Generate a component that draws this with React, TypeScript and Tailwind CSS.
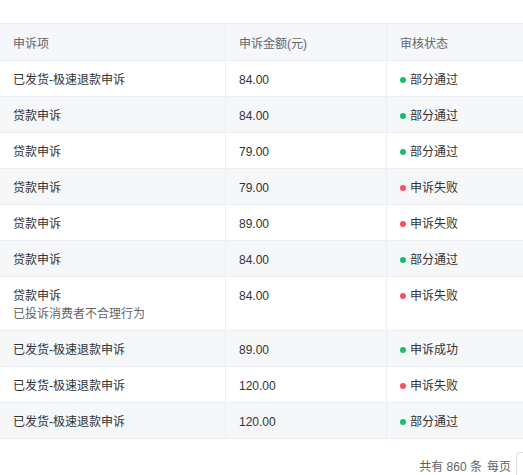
import React from "react";

type Row = { item: string; sub?: string; amount: string; status: string; ok: boolean };

const rows: Row[] = [
  { item: "已发货-极速退款申诉", amount: "84.00", status: "部分通过", ok: true },
  { item: "贷款申诉", amount: "84.00", status: "部分通过", ok: true },
  { item: "贷款申诉", amount: "79.00", status: "部分通过", ok: true },
  { item: "贷款申诉", amount: "79.00", status: "申诉失败", ok: false },
  { item: "贷款申诉", amount: "89.00", status: "申诉失败", ok: false },
  { item: "贷款申诉", amount: "84.00", status: "部分通过", ok: true },
  { item: "贷款申诉", sub: "已投诉消费者不合理行为", amount: "84.00", status: "申诉失败", ok: false },
  { item: "已发货-极速退款申诉", amount: "89.00", status: "申诉成功", ok: true },
  { item: "已发货-极速退款申诉", amount: "120.00", status: "申诉失败", ok: false },
  { item: "已发货-极速退款申诉", amount: "120.00", status: "部分通过", ok: true },
];

const cell = "border-r border-b border-[#ebeef5] pl-[13px] pt-[10px] pb-[7px] leading-[18px]";
const hcell = "border-r border-b border-[#ebeef5] pl-[13px] pt-[11px] pb-[7px] leading-[18px]";

export default function App() {
  return (
    <div
      className="w-[523px] h-[475px] overflow-hidden bg-white text-[12px]"
      style={{ fontFamily: '"Liberation Sans", "Noto Sans CJK SC", sans-serif' }}
    >
      <div className="mt-[23px] border-t border-[#ebeef5]">
        <div className="grid grid-cols-[226px_161px_1fr] bg-[#f5f7fa] text-[#666]">
          <div className={hcell}>申诉项</div>
          <div className={hcell}>申诉金额(元)</div>
          <div className={hcell + " border-r-0"}>审核状态</div>
        </div>
        {rows.map((r, i) => (
          <div
            key={i}
            className={
              "grid grid-cols-[226px_161px_1fr] text-[#333] " + (i % 2 === 1 ? "bg-[#f6f7f9]" : "bg-white")
            }
          >
            <div className={cell}>
              <div>{r.item}</div>
              {r.sub && <div className="text-[#666]">{r.sub}</div>}
            </div>
            <div className={cell}>{r.amount}</div>
            <div className={cell + " border-r-0"}>
              <div className="flex items-center gap-[4px]">
                <span
                  className={
                    "inline-block w-[6px] h-[6px] rounded-full " + (r.ok ? "bg-[#19be6b]" : "bg-[#f5515f]")
                  }
                />
                <span>{r.status}</span>
              </div>
            </div>
          </div>
        ))}
      </div>
      <div className="mt-[13px] mr-[-93px] flex items-center justify-end text-[#606266]">
        <span className="pt-[2px]">共有 860 条</span>
        <span className="ml-[5px] pt-[2px]">每页</span>
        <div className="ml-[5px] w-[100px] h-[28px] rounded-[4px] border border-[#dcdfe6] bg-white" />
      </div>
    </div>
  );
}
